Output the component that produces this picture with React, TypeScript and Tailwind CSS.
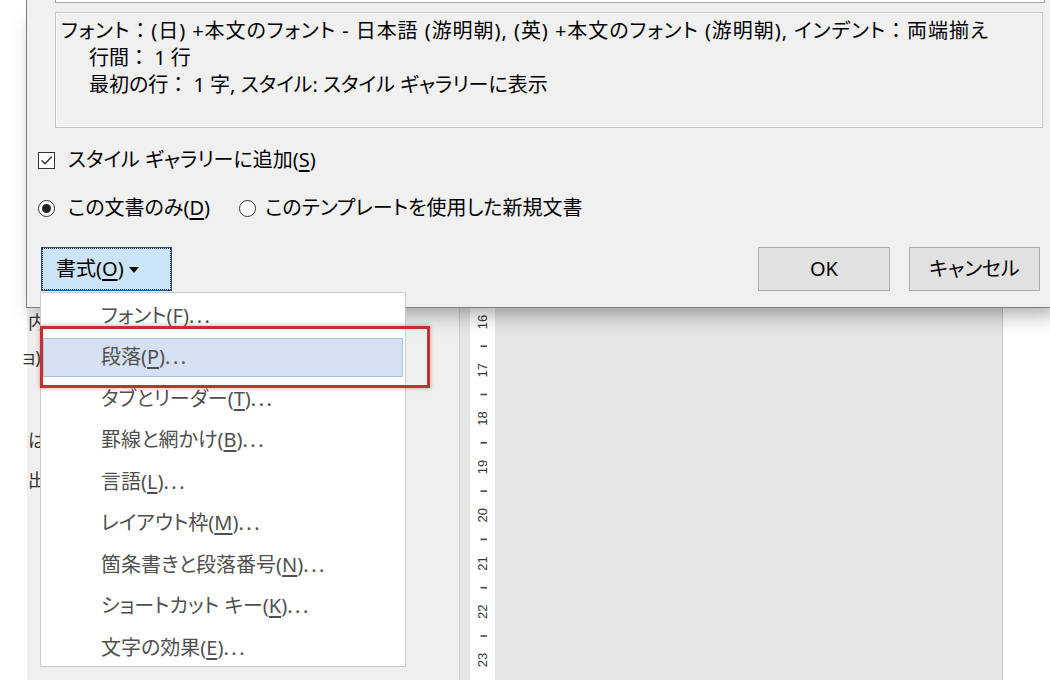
import React from "react";

const U = ({ c }: { c: string }) => <span className="underline underline-offset-[3px]">{c}</span>;
const C = () => <span className="[font-feature-settings:normal]">：</span>;
const D = () => <span className="tracking-[2.5px]">...</span>;

const menuItems: { pre: string; key: string; active?: boolean }[] = [
  { pre: "フォント", key: "F" },
  { pre: "段落", key: "P", active: true },
  { pre: "タブとリーダー", key: "T" },
  { pre: "罫線と網かけ", key: "B" },
  { pre: "言語", key: "L" },
  { pre: "レイアウト枠", key: "M" },
  { pre: "箇条書きと段落番号", key: "N" },
  { pre: "ショートカット キー", key: "K" },
  { pre: "文字の効果", key: "E" },
];

function Ruler() {
  const nums = [16, 17, 18, 19, 20, 21, 22, 23];
  return (
    <svg width="25" height="372" viewBox="0 0 25 372">
      {nums.map((n, i) => {
        const y = 14 + i * 48.3;
        return (
          <g key={n}>
            <text
              x={0}
              y={0}
              transform={`translate(17 ${y}) rotate(-90)`}
              textAnchor="middle"
              fontSize="13"
              fill="#333"
              fontFamily="Liberation Sans, Arial, sans-serif"
            >
              {n}
            </text>
            {i < nums.length - 1 && (
              <line x1={10.5} x2={17} y1={y + 24.2} y2={y + 24.2} stroke="#444" strokeWidth="1.6" />
            )}
          </g>
        );
      })}
    </svg>
  );
}

export default function App() {
  return (
    <div className="relative w-[1050px] h-[692px] overflow-hidden bg-white text-black font-['Noto_Sans','Noto_Sans_CJK_JP',sans-serif] [font-feature-settings:'palt']">
      {/* Dialog */}
      <div className="relative z-10 ml-[26px] h-[308px] w-[1040px] border-l border-b border-[#7d7d7d] bg-[#f0f0f0] pl-[11px] shadow-[0_14px_20px_-8px_rgba(0,0,0,0.35)]">
        <div className="ml-[17px] h-[3px] w-[990px] border-x border-b border-[#a5a5a5] bg-white" />
        <div className="ml-[17px] mt-[9px] h-[116px] w-[988px] border border-[#c4c4c4] px-[5px] pt-[4px] text-[20px] leading-[27px] shadow-[inset_0_0_0_1px_#ffffff]">
          <div className="whitespace-nowrap tracking-[0.95px]">
            フォント<C />(日) +本文のフォント - 日本語 (游明朝), (英) +本文のフォント (游明朝), インデント<C />両端揃え
          </div>
          <div className="pl-[28px] whitespace-nowrap">
            行間<C /> 1 行
          </div>
          <div className="pl-[28px] whitespace-nowrap">
            最初の行<C /> 1 字, スタイル: スタイル ギャラリーに表示
          </div>
        </div>

        {/* checkbox */}
        <div className="mt-[18px] flex h-[28px] items-center text-[20px]">
          <div className="flex h-[17px] w-[17px] shrink-0 items-center justify-center border border-[#333] bg-white">
            <svg width="13" height="11" viewBox="0 0 13 11">
              <path d="M1.5 5.2 L5 8.8 L11.8 1.8" fill="none" stroke="#333" strokeWidth="1.3" />
            </svg>
          </div>
          <span className="ml-[13px] whitespace-nowrap">
            スタイル ギャラリーに追加(<U c="S" />)
          </span>
        </div>

        {/* radios */}
        <div className="mt-[20px] flex h-[28px] items-center text-[20px]">
          <div className="flex h-[17px] w-[17px] shrink-0 items-center justify-center rounded-full border border-[#333] bg-white">
            <div className="h-[9px] w-[9px] rounded-full bg-[#222]" />
          </div>
          <span className="ml-[13px] whitespace-nowrap">
            この文書のみ(<U c="D" />)
          </span>
          <div className="ml-[29px] h-[17px] w-[17px] shrink-0 rounded-full border border-[#333] bg-white" />
          <span className="ml-[9px] whitespace-nowrap">このテンプレートを使用した新規文書</span>
        </div>

        {/* buttons */}
        <div className="mt-[25px] flex h-[44px] items-stretch text-[20px]">
          <div className="ml-[3px] flex w-[131px] items-center border border-[#1f4f86] bg-[#cce4f7] pl-[14px] outline-1 outline-dotted outline-[#222] -outline-offset-[2px]">
            <span className="whitespace-nowrap">
              書式(<U c="O" />)
            </span>
            <span className="ml-[5px] mt-[2px] h-0 w-0 border-x-[5px] border-t-[6px] border-x-transparent border-t-[#111]" />
          </div>
          <div className="ml-[586px] flex w-[132px] items-center justify-center border border-[#adadad] bg-[#e1e1e1]">OK</div>
          <div className="ml-[19px] flex w-[131px] items-center justify-center border border-[#adadad] bg-[#e1e1e1]">キャンセル</div>
        </div>
      </div>

      {/* Background window */}
      <div className="flex h-[372px]">
        <div className="w-[27px] bg-white" />
        <div className="w-[433px] border-r border-[#cfcfcf] bg-[#efefef] text-[18px] leading-[22px] text-[#333]">
          <div className="mt-[3px] whitespace-nowrap pl-[1px]">内容</div>
          <div className="mt-[13px] -ml-[5px] whitespace-nowrap">ョ)</div>
          <div className="mt-[61px] whitespace-nowrap pl-[1px]">は</div>
          <div className="mt-[18px] whitespace-nowrap pl-[1px]">出</div>
        </div>
        <div className="w-[10px] bg-[#e6e6e6]" />
        <div className="w-[25px] bg-white">
          <Ruler />
        </div>
        <div className="w-[508px] border-r border-[#c6c6c6] bg-[#e6e6e6]" />
        <div className="flex-1 bg-white" />
      </div>

      {/* Dropdown menu */}
      <div className="absolute left-[40px] top-[292px] z-20 h-[375px] w-[366px] border border-[#cccccc] bg-white pt-[2px] text-[20px] text-[#505050]">
        {menuItems.map((m) => (
          <div key={m.key} className="flex h-[41.5px] items-center px-[2px]">
            <div
              className={
                m.active
                  ? "flex h-[39px] w-full items-center border border-[#a9c0e4] bg-[#d5e1f2] pl-[57px]"
                  : "flex h-[39px] w-full items-center border border-transparent pl-[57px]"
              }
            >
              <span className="whitespace-nowrap">
                {m.pre}(<U c={m.key} />)
                <D />
              </span>
            </div>
          </div>
        ))}
      </div>

      {/* red annotation */}
      <div className="pointer-events-none absolute left-[40px] top-[326px] z-30 h-[62px] w-[390px] border-[3px] border-[#c42f2f] shadow-[0_0_4px_rgba(220,70,70,0.6)]" />
    </div>
  );
}
